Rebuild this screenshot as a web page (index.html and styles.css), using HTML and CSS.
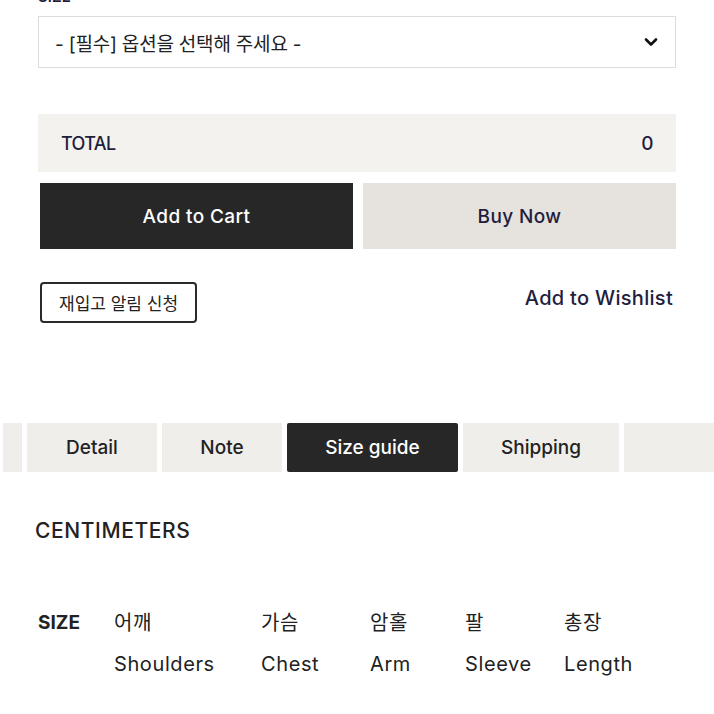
FILE: index.html
```html
<!DOCTYPE html>
<html lang="ko">
<head>
    <meta charset="UTF-8">
    <meta name="viewport" content="width=device-width, initial-scale=1.0">
    <title>Size guide</title>
    <link rel="stylesheet" href="styles.css">
</head>
<body>
    <div class="product">
        <div class="option-label">SIZE</div>
        <div class="select-box">
            <span>- [필수] 옵션을 선택해 주세요 -</span>
            <svg class="chevron" width="14" height="10" viewBox="0 0 14 10">
                <path d="M2 2.5 L7 7.5 L12 2.5" fill="none" stroke="#111" stroke-width="2.6" stroke-linecap="round" stroke-linejoin="round"/>
            </svg>
        </div>

        <div class="total-bar">
            <span>TOTAL</span>
            <span>0</span>
        </div>

        <div class="actions">
            <button class="btn-cart">Add to Cart</button>
            <button class="btn-buy">Buy Now</button>
        </div>

        <div class="extra">
            <button class="btn-restock">재입고 알림 신청</button>
            <a class="wishlist" href="#">Add to Wishlist</a>
        </div>
    </div>

    <div class="tabs">
        <div class="tab tab-cut"></div>
        <div class="tab tab-detail">Detail</div>
        <div class="tab tab-note">Note</div>
        <div class="tab tab-size active">Size guide</div>
        <div class="tab tab-ship">Shipping</div>
        <div class="tab tab-more"></div>
    </div>

    <div class="size-guide">
        <h2>CENTIMETERS</h2>
        <div class="size-table">
            <div class="cell head">SIZE</div>
            <div class="cell">어깨</div>
            <div class="cell">가슴</div>
            <div class="cell">암홀</div>
            <div class="cell">팔</div>
            <div class="cell">총장</div>
            <div class="cell"></div>
            <div class="cell">Shoulders</div>
            <div class="cell">Chest</div>
            <div class="cell">Arm</div>
            <div class="cell">Sleeve</div>
            <div class="cell">Length</div>
        </div>
    </div>
</body>
</html>
```

FILE: styles.css
```css
/* Global */
body {
    margin: 0;
    background-color: #ffffff;
    color: #222;
    font-family: Inter, "Noto Sans CJK KR", sans-serif;
    overflow: hidden;
}
button {
    font-family: inherit;
    cursor: pointer;
}
.product {
    padding: 0 38px 0 38px;
}
.option-label {
    margin-top: -10px;
    height: 26px;
    font-size: 15px;
    font-weight: 600;
    color: #1f1e3d;
    line-height: 14px;
}
/* Select */
.select-box {
    border: 1px solid #dcdcdc;
    display: flex;
    align-items: center;
    justify-content: space-between;
    padding: 0 17px 0 16px;
    font-size: 19px;
    color: #222;
    box-sizing: border-box;
    height: 52px;
    letter-spacing: -0.2px;
}
.chevron {
    display: block;
}
/* Total */
.total-bar {
    margin-top: 46px;
    height: 58px;
    background-color: #f4f2ee;
    display: flex;
    align-items: center;
    justify-content: space-between;
    padding: 0 23px;
    font-size: 18px;
    font-weight: 500;
    color: #1f1e3d;
    letter-spacing: -0.6px;
}
.total-bar span:last-child {
    font-size: 19px;
}
/* Buttons */
.actions {
    display: flex;
    gap: 10px;
    margin-top: 11px;
    padding-left: 2px;
}
.actions button {
    height: 66px;
    border: none;
    font-size: 19px;
    font-weight: 500;
    letter-spacing: 0.4px;
    flex: 1;
}
.btn-cart {
    background-color: #272727;
    color: #ffffff;
}
.btn-buy {
    background-color: #e6e2de;
    color: #1f1e3d;
}
.extra {
    display: flex;
    justify-content: space-between;
    align-items: center;
    margin-top: 33px;
    padding-left: 2px;
}
.btn-restock {
    height: 41px;
    padding: 0 17px;
    border: 2px solid #2a2a2a;
    border-radius: 4px;
    background: #fff;
    color: #222;
    font-size: 17px;
}
.wishlist {
    color: #1f1e3d;
    font-size: 20px;
    font-weight: 500;
    letter-spacing: 0.3px;
    text-decoration: none;
    margin-top: -10px;
    margin-right: 3px;
}
/* Tabs */
.tabs {
    display: flex;
    gap: 5px;
    margin-top: 100px;
    padding-left: 3px;
}
.tab {
    height: 49px;
    background-color: #f0eeeb;
    display: flex;
    align-items: center;
    justify-content: center;
    font-size: 19px;
    font-weight: 500;
    color: #222;
    flex-shrink: 0;
}
.tab-cut { width: 19px; }
.tab-detail { width: 130px; }
.tab-note { width: 120px; }
.tab-size { width: 171px; }
.tab-ship { width: 156px; }
.tab-more { width: 100px; }
.tab.active {
    background-color: #272727;
    color: #ffffff;
    border-radius: 2px;
}
/* Size guide */
.size-guide {
    padding-left: 35px;
}
.size-guide h2 {
    margin: 46px 0 0 0;
    font-size: 21px;
    font-weight: 500;
    letter-spacing: 0.6px;
    color: #222;
    line-height: 26px;
}
.size-table {
    display: grid;
    grid-template-columns: 76px 147px 109px 95px 99px auto;
    grid-auto-rows: 41px;
    margin-top: 64px;
    padding-left: 3px;
    font-size: 20px;
    letter-spacing: 0.6px;
    color: #222;
}
.cell {
    line-height: 30px;
}
.cell.head {
    font-weight: 700;
    font-size: 19px;
    letter-spacing: 0;
}
```
